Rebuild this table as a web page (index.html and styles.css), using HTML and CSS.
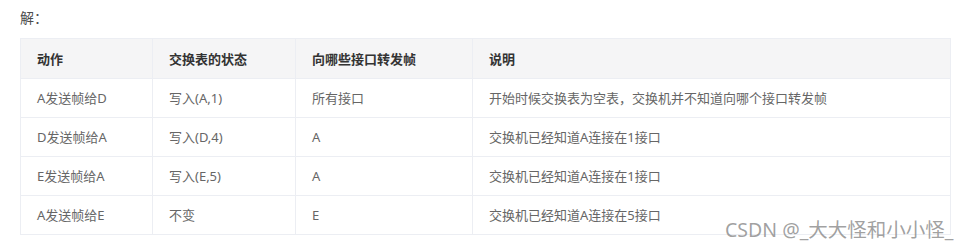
FILE: index.html
```html
<!DOCTYPE html>
<html lang="zh">
<head>
<meta charset="utf-8">
<link rel="stylesheet" href="styles.css">
</head>
<body>
<div class="page">
  <p class="intro">解：</p>
  <table class="grid">
    <colgroup>
      <col class="c1"><col class="c2"><col class="c3"><col class="c4">
    </colgroup>
    <thead>
      <tr><th>动作</th><th>交换表的状态</th><th>向哪些接口转发帧</th><th>说明</th></tr>
    </thead>
    <tbody>
      <tr><td>A发送帧给D</td><td>写入(A,1)</td><td>所有接口</td><td>开始时候交换表为空表，交换机并不知道向哪个接口转发帧</td></tr>
      <tr><td>D发送帧给A</td><td>写入(D,4)</td><td>A</td><td>交换机已经知道A连接在1接口</td></tr>
      <tr><td>E发送帧给A</td><td>写入(E,5)</td><td>A</td><td>交换机已经知道A连接在1接口</td></tr>
      <tr><td>A发送帧给E</td><td>不变</td><td>E</td><td>交换机已经知道A连接在5接口</td></tr>
    </tbody>
  </table>
  <div class="watermark">CSDN @_大大怪和小小怪_</div>
</div>
</body>
</html>
```
FILE: styles.css
```css
html, body {
  margin: 0;
  padding: 0;
  background: #fff;
}
.page {
  position: relative;
  width: 972px;
  height: 248px;
  padding: 8px 0 0 20px;
  box-sizing: border-box;
  font-family: "Noto Sans", "Noto Sans CJK SC", sans-serif;
}
.intro {
  margin: 0;
  font-size: 14px;
  line-height: 20px;
  color: #4d4d4d;
}
.grid {
  margin-top: 10px;
  border-collapse: collapse;
  width: 930px;
  table-layout: fixed;
  font-size: 13px;
}
.c1 { width: 132px; }
.c2 { width: 143px; }
.c3 { width: 177px; }
.c4 { width: 478px; }
.grid th, .grid td {
  border: 1px solid #eceef3;
  height: 39px;
  padding: 0 16px;
  box-sizing: border-box;
  text-align: left;
  vertical-align: middle;
  line-height: 18px;
  white-space: nowrap;
}
.grid th {
  height: 40px;
  background: #f5f5f6;
  color: #333;
  font-weight: bold;
}
.grid td {
  color: #666;
}
.watermark {
  position: absolute;
  left: 725px;
  top: 217px;
  font-size: 19.5px;
  line-height: 26px;
  color: rgba(130, 130, 130, 0.75);
  white-space: nowrap;
}
```
